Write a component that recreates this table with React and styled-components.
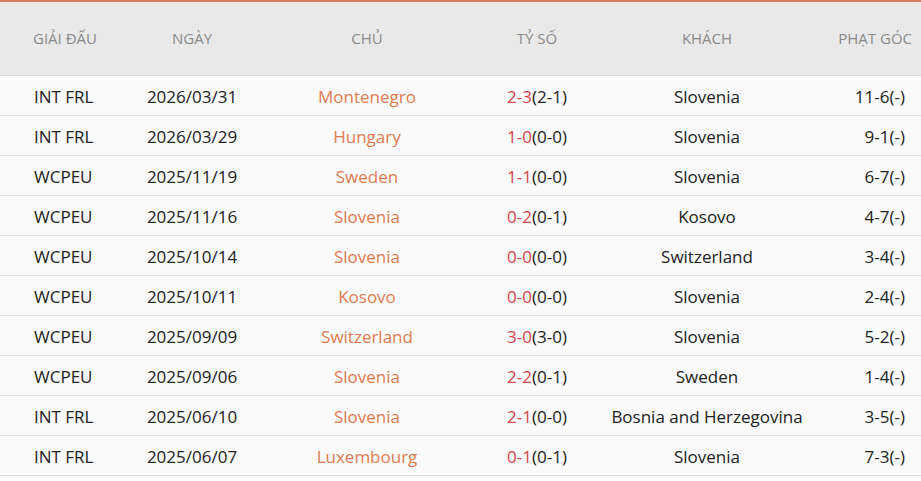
import React from 'react'
import styled, { createGlobalStyle } from 'styled-components'

const GlobalStyle = createGlobalStyle`
  html, body {
    margin: 0;
    padding: 0;
    background: #ffffff;
  }
  body {
    font-family: "Open Sans", "Liberation Sans", sans-serif;
  }
`

const matches = [
  ['INT FRL', '2026/03/31', 'Montenegro', '2-3', '(2-1)', 'Slovenia', '11-6(-)'],
  ['INT FRL', '2026/03/29', 'Hungary', '1-0', '(0-0)', 'Slovenia', '9-1(-)'],
  ['WCPEU', '2025/11/19', 'Sweden', '1-1', '(0-0)', 'Slovenia', '6-7(-)'],
  ['WCPEU', '2025/11/16', 'Slovenia', '0-2', '(0-1)', 'Kosovo', '4-7(-)'],
  ['WCPEU', '2025/10/14', 'Slovenia', '0-0', '(0-0)', 'Switzerland', '3-4(-)'],
  ['WCPEU', '2025/10/11', 'Kosovo', '0-0', '(0-0)', 'Slovenia', '2-4(-)'],
  ['WCPEU', '2025/09/09', 'Switzerland', '3-0', '(3-0)', 'Slovenia', '5-2(-)'],
  ['WCPEU', '2025/09/06', 'Slovenia', '2-2', '(0-1)', 'Sweden', '1-4(-)'],
  ['INT FRL', '2025/06/10', 'Slovenia', '2-1', '(0-0)', 'Bosnia and Herzegovina', '3-5(-)'],
  ['INT FRL', '2025/06/07', 'Luxembourg', '0-1', '(0-1)', 'Slovenia', '7-3(-)'],
]

const cols = '128px 128px 222px 118px 222px 1fr'

export default function App() {
  return (
    <>
      <GlobalStyle />
      <Table>
        <Head>
          <HeadCell align="left" pad="33px">GIẢI ĐẤU</HeadCell>
          <HeadCell>NGÀY</HeadCell>
          <HeadCell>CHỦ</HeadCell>
          <HeadCell>TỶ SỐ</HeadCell>
          <HeadCell>KHÁCH</HeadCell>
          <HeadCell align="right" pad="9px">PHẠT GÓC</HeadCell>
        </Head>
        {matches.map((m, i) => (
          <Row key={i}>
            <Cell align="left" pad="34px">{m[0]}</Cell>
            <Cell>{m[1]}</Cell>
            <Cell tone="home">{m[2]}</Cell>
            <Cell>
              <Score>{m[3]}</Score>
              {m[4]}
            </Cell>
            <Cell>{m[5]}</Cell>
            <Cell align="right" pad="16px">{m[6]}</Cell>
          </Row>
        ))}
      </Table>
    </>
  )
}

const Table = styled.div`
  width: 921px;
  border-top: 2px solid #d9825f;
`

const Head = styled.div`
  display: grid;
  grid-template-columns: ${cols};
  height: 73px;
  background: #e9e9e9;
  border-bottom: 1px solid #dcdcdc;
`

const HeadCell = styled.div`
  display: flex;
  align-items: center;
  justify-content: ${p => (p.align === 'left' ? 'flex-start' : p.align === 'right' ? 'flex-end' : 'center')};
  padding-left: ${p => (p.align === 'left' ? p.pad : '0')};
  padding-right: ${p => (p.align === 'right' ? p.pad : '0')};
  padding-bottom: 1px;
  font-size: 15px;
  color: #8a8a8a;
  white-space: nowrap;
`

const Row = styled.div`
  display: grid;
  grid-template-columns: ${cols};
  height: 39px;
  background: #fafafa;
  border-bottom: 1px solid #e2e2e2;
`

const Cell = styled.div`
  display: flex;
  align-items: center;
  justify-content: ${p => (p.align === 'left' ? 'flex-start' : p.align === 'right' ? 'flex-end' : 'center')};
  padding-left: ${p => (p.align === 'left' ? p.pad : '0')};
  padding-right: ${p => (p.align === 'right' ? p.pad : '0')};
  padding-top: 1px;
  font-size: 17px;
  color: ${p => (p.tone === 'home' ? '#e07a50' : '#222222')};
  white-space: nowrap;
`

const Score = styled.span`
  color: #d8434c;
`
